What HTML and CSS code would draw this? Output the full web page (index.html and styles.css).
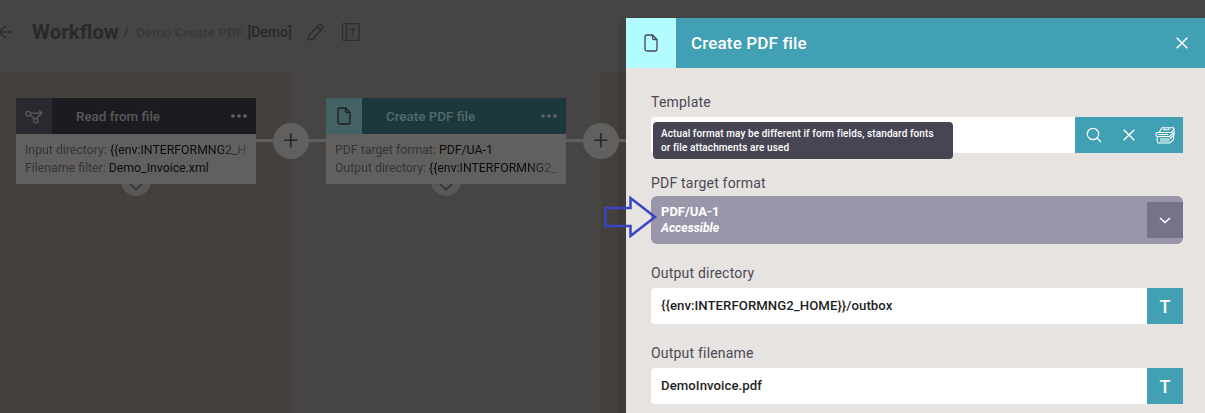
FILE: index.html
```html
<!DOCTYPE html>
<html lang="en">
<head>
<meta charset="utf-8">
<title>Create PDF file</title>
<link rel="stylesheet" href="styles.css">
</head>
<body>
<div class="app">
  <header class="topbar">
    <svg class="back" width="14" height="20" viewBox="0 0 14 20"><path d="M13.500 10H1M8 3.500L1 10l7 6.500" fill="none" stroke="#2c2c30" stroke-width="1.500"/></svg>
    <h1 class="title">Workflow</h1>
    <span class="crumb"><span class="slash">/</span>Demo Create PDF <b class="crumb-tag">[Demo]</b></span>
    <svg class="edit" width="17" height="18" viewBox="0 0 17 18"><path d="M1 17l1-5L12 1.700a1.500 1.500 0 0 1 2 0l1.500 1.500a1.500 1.500 0 0 1 0 2L6 15.800z M10.300 3.500l3.500 3.500" fill="none" stroke="#2c2c30" stroke-width="1.300"/></svg>
    <svg class="help" width="18" height="18" viewBox="0 0 18 18"><rect x=".7" y=".7" width="16.300" height="16.600" rx="1" fill="none" stroke="#2c2c30" stroke-width="1.300"/><path d="M4.500 .7v16.600" stroke="#2c2c30" stroke-width="1.300"/><text x="10.500" y="12.500" class="help-mark">?</text></svg>
  </header>
  <main class="canvas">
    <section class="column column-first">
      <div class="step">
        <div class="step-head dark">
          <div class="step-icon dark-icon">
            <svg width="18" height="15" viewBox="0 0 18 15"><g fill="none" stroke="#5f5f62" stroke-width="1.200"><circle cx="3.300" cy="4.800" r="2.400"/><circle cx="10.700" cy="11.700" r="2.200"/><path d="M5.800 4.200H17M14 1.500l3 2.700L14 7M5.500 6.500Q8 8 9.300 10M17 4.200Q13 7 11.500 9.600"/></g></svg>
          </div>
          <span class="step-name">Read from file</span>
          <svg class="dots" width="16" height="4" viewBox="0 0 16 4"><circle cx="2" cy="2" r="1.800"/><circle cx="8" cy="2" r="1.800"/><circle cx="14" cy="2" r="1.800"/></svg>
        </div>
        <div class="step-body">
          <div class="line line-fade"><span class="key">Input directory:</span> {{env:INTERFORMNG2_HOME}}/inbox</div>
          <div class="line"><span class="key">Filename filter:</span> Demo_Invoice.xml</div>
        </div>
        <div class="tab"><svg width="14" height="8" viewBox="0 0 14 8"><path d="M1 1l6 5.500L13 1" fill="none" stroke="#2c2c30" stroke-width="1.300"/></svg></div>
      </div>
      <div class="link"><span class="plus">+</span></div>
    </section>
    <section class="column column-second">
      <div class="step">
        <div class="step-head teal">
          <div class="step-icon teal-icon">
            <svg width="14" height="18" viewBox="0 0 14 18"><path d="M3 1h5.500L13 5.500V15a2 2 0 0 1-2 2H3a2 2 0 0 1-2-2V3a2 2 0 0 1 2-2zM8.500 1v3a1.500 1.500 0 0 0 1.500 1.500h3" fill="none" stroke="#1e1e22" stroke-width="1.300"/></svg>
          </div>
          <span class="step-name">Create PDF file</span>
          <svg class="dots" width="16" height="4" viewBox="0 0 16 4"><circle cx="2" cy="2" r="1.800"/><circle cx="8" cy="2" r="1.800"/><circle cx="14" cy="2" r="1.800"/></svg>
        </div>
        <div class="step-body">
          <div class="line"><span class="key">PDF target format:</span> PDF/UA-1</div>
          <div class="line line-fade"><span class="key">Output directory:</span> {{env:INTERFORMNG2_HOME}}/outbox</div>
        </div>
        <div class="tab"><svg width="14" height="8" viewBox="0 0 14 8"><path d="M1 1l6 5.500L13 1" fill="none" stroke="#2c2c30" stroke-width="1.300"/></svg></div>
      </div>
      <div class="link"><span class="plus">+</span></div>
    </section>
    <section class="column-rest"></section>
  </main>

  <aside class="panel">
    <div class="panel-head">
      <div class="panel-icon">
        <svg width="14" height="18" viewBox="0 0 14 18"><path d="M3 1h5.500L13 5.500V15a2 2 0 0 1-2 2H3a2 2 0 0 1-2-2V3a2 2 0 0 1 2-2zM8.500 1v3a1.500 1.500 0 0 0 1.500 1.500h3" fill="none" stroke="#46445a" stroke-width="1.300"/></svg>
      </div>
      <h2 class="panel-title">Create PDF file</h2>
      <svg class="close" width="12" height="12" viewBox="0 0 12 12"><path d="M.7 .7l10.600 10.600M11.300 .7L.7 11.300" stroke="#fff" stroke-width="1.500"/></svg>
    </div>
    <div class="panel-body">
      <div class="field">
        <label class="label">Template</label>
        <div class="control">
          <div class="value"></div>
          <div class="btn-group">
            <svg width="16" height="16" viewBox="0 0 16 16"><circle cx="7" cy="7" r="5.700" fill="none" stroke="#fff" stroke-width="1.200"/><path d="M11 11l4 4" stroke="#fff" stroke-width="1.300"/></svg>
            <svg width="12" height="12" viewBox="0 0 12 12"><path d="M.7 .7l10.600 10.600M11.300 .7L.7 11.300" stroke="#fff" stroke-width="1.400"/></svg>
            <svg width="20" height="17" viewBox="0 0 20 17"><g fill="none" stroke="#fff" stroke-width="1.100"><path d="M4 5.500L7 .8h11.500l.7 1.700-3 3z"/><path d="M9.500 1.200l-.8 1.600h5l.8-1.600"/><path d="M4 5.500H2C.6 6 .6 9 2 9.500h12.500l4.700-4.500v2.500L15 11.500"/><path d="M3 7.500h10M3 9.500c-1.200.6-1.200 4.500 0 6.500h12l3.500-3.700V8M5 12h9.500M5 14h9.500"/></g></svg>
          </div>
          <div class="tooltip">Actual format may be different if form fields, standard fonts<br>or file attachments are used</div>
        </div>
      </div>
      <div class="field">
        <label class="label label-tight">PDF target format</label>
        <div class="select">
          <div class="select-text">
            <strong class="select-main">PDF/UA-1</strong>
            <em class="select-sub">Accessible</em>
          </div>
          <div class="select-btn"><svg width="12" height="7" viewBox="0 0 12 7"><path d="M1 1l5 4.500L11 1" fill="none" stroke="#fff" stroke-width="1.600"/></svg></div>
          <svg class="arrow" width="54" height="42" viewBox="0 0 54 42"><path d="M1.500 12H26.500V2L51 21 26.500 40V30H1.500z" fill="none" stroke="#3b45c4" stroke-width="2.500"/></svg>
        </div>
      </div>
      <div class="field">
        <label class="label">Output directory</label>
        <div class="control">
          <div class="value">{{env:INTERFORMNG2_HOME}}/outbox</div>
          <div class="t-btn">T</div>
        </div>
      </div>
      <div class="field">
        <label class="label">Output filename</label>
        <div class="control">
          <div class="value">DemoInvoice.pdf</div>
          <div class="t-btn">T</div>
        </div>
      </div>
    </div>
  </aside>
</div>
</body>
</html>
```

FILE: styles.css
```css
* { box-sizing: border-box; }
html, body { margin: 0; height: 100%; }
body { font-family: Roboto, "Liberation Sans", sans-serif; overflow: hidden; background: #474543; }
.app { position: relative; width: 1205px; height: 413px; overflow: hidden; background: #464341; }

.topbar { height: 72px; display: flex; align-items: center; padding-bottom: 8px; background: #474543; }
.back { margin-left: -2px; flex: none; }
.title { margin: 0 0 0 20px; font-size: 20.500px; font-weight: 700; color: #29292c; }
.crumb { margin-left: 5px; font-size: 13.500px; font-weight: 700; color: #3a393b; white-space: nowrap; }
.slash { margin-right: 7px; font-size: 14px; color: #323134; }
.crumb-tag { margin-left: 1px; color: #28282c; font-size: 14px; font-weight: 500; }
.edit { margin-left: 15px; }
.help { margin-left: 18px; }
.help-mark { font: 700 10px Roboto, sans-serif; fill: #2c2c30; text-anchor: middle; }

.canvas { display: flex; height: 341px; background: #44403e; }
.column { position: relative; flex: none; padding-top: 26px; }
.column-first { z-index: 2; width: 291px; padding-left: 16px; background: #44403e; }
.column-second { z-index: 1; width: 310px; padding-left: 35px; background: #474543; }
.column-rest { flex: 1; background: #44403e; }
.step { position: relative; width: 240px; }
.step-head { display: flex; align-items: center; height: 36px; }
.dark { background: #1c1b20; }
.teal { background: #1c383d; }
.step-icon { width: 36px; height: 36px; display: flex; align-items: center; justify-content: center; flex: none; }
.dark-icon { background: #2a292f; }
.teal-icon { background: #426264; }
.step-name { margin-left: 24px; font-size: 13.400px; font-weight: 500; color: #59595c; }
.teal .step-name { color: #536a6d; }
.dots { margin-left: auto; margin-right: 9px; fill: #66666a; }
.step-body { position: relative; z-index: 1; height: 50px; padding: 7px 9px 0; background: #62605e; overflow: hidden; font-size: 12.300px; line-height: 18px; color: #0c0c0e; }
.line { white-space: nowrap; overflow: hidden; }
.line-fade { -webkit-mask-image: linear-gradient(to left, rgba(0,0,0,.25) 0, #000 30px); mask-image: linear-gradient(to left, rgba(0,0,0,.25) 0, #000 30px); }
.key { color: #353436; }
.tab { position: absolute; left: 105px; top: 78px; width: 30px; height: 20px; border-radius: 0 0 15px 15px; background: #5a5856; display: flex; align-items: flex-end; justify-content: center; padding-bottom: 5px; }
.link { position: absolute; top: 67px; left: 256px; width: 70px; height: 3px; background: #62605e; }
.column-second .link { left: 275px; width: 60px; }
.plus { position: absolute; left: 17px; top: -16px; width: 36px; height: 36px; border-radius: 50%; background: #62605e; display: flex; align-items: center; justify-content: center; font-size: 27px; font-weight: 300; line-height: 1; color: #25252a; }

.panel { position: absolute; left: 626px; top: 18px; width: 579px; height: 395px; background: #e7e3e0; }
.panel::before { content: ""; position: absolute; left: -9px; top: 0; bottom: 0; width: 9px; background: rgba(0,0,0,.07); clip-path: polygon(100% 0, 100% 100%, 0 100%, 0 9px); }
.panel-head { height: 50px; display: flex; align-items: center; background: #41a0b3; color: #fff; }
.panel-icon { width: 50px; height: 50px; background: #b2fbff; display: flex; align-items: center; justify-content: center; flex: none; }
.panel-title { margin: 0 0 0 15px; font-size: 17px; font-weight: 500; letter-spacing: .15px; }
.close { margin-left: auto; margin-right: 17px; }
.panel-body { padding: 26px 22px 0 25px; }
.field { margin-bottom: 21px; }
.label { display: block; height: 16px; margin-bottom: 7px; font-size: 14px; letter-spacing: .2px; line-height: 16px; color: #4b4955; }
.label-tight { height: 17px; padding-top: 1px; margin-bottom: 5px; }
.control { position: relative; display: flex; height: 36px; background: #fff; border-radius: 4px 0 0 4px; }
.value { flex: 1; padding-left: 10px; font-size: 13.200px; font-weight: 500; letter-spacing: .05px; line-height: 36px; color: #1f1f24; }
.btn-group { width: 108px; display: flex; align-items: center; justify-content: space-between; padding: 0 8px 0 11px; background: #41a0b3; }
.t-btn { width: 36px; display: flex; align-items: center; justify-content: center; background: #41a0b3; color: #fff; font-size: 18px; font-weight: 500; }
.tooltip { position: absolute; left: 2px; top: 5px; width: 300px; height: 37px; padding: 5px 8px; border-radius: 4px; background: #474553; color: #fff; font-size: 10px; font-weight: 500; line-height: 14px; letter-spacing: .1px; white-space: nowrap; }
.select { position: relative; display: flex; align-items: center; justify-content: space-between; height: 48px; border-radius: 6px; background: #9996aa; color: #fff; }
.select-text { padding-left: 10px; display: flex; flex-direction: column; line-height: 17px; }
.select-main { font-weight: 700; font-size: 13px; }
.select-sub { font-weight: 700; font-size: 12.200px; }
.select-btn { width: 36px; height: 36px; display: flex; align-items: center; justify-content: center; background: #757388; }
.arrow { position: absolute; left: -47px; top: 0; }
```
